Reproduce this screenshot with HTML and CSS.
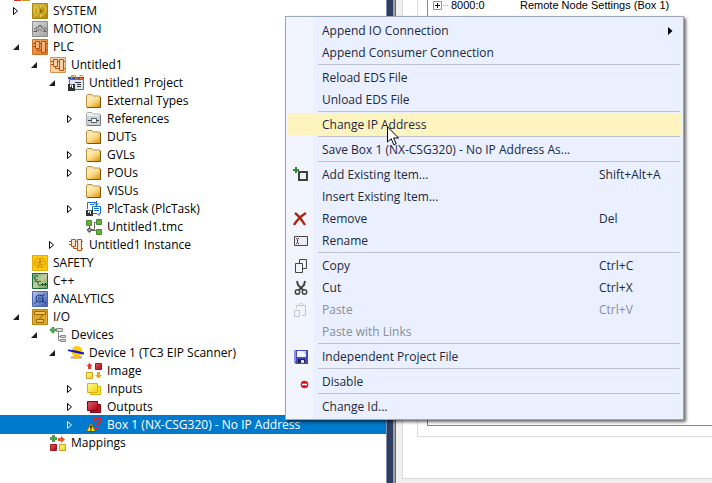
FILE: index.html
```html
<!DOCTYPE html>
<html lang="en">
<head>
	<meta charset="UTF-8">
	<title>Solution Explorer</title>
	<link rel="stylesheet" href="styles.css">
</head>
<body>
	<!-- shared icons -->
	<svg class="sprite" aria-hidden="true">
		<defs>
			<linearGradient id="g-folder" x1="0" y1="0" x2="1" y2="1"><stop offset="0" stop-color="#fff6cf"/><stop offset=".5" stop-color="#fad67c"/><stop offset="1" stop-color="#d8940c"/></linearGradient>
			<linearGradient id="g-gold" x1="0" y1="0" x2="1" y2="1"><stop offset="0" stop-color="#dcbd4c"/><stop offset="1" stop-color="#b18605"/></linearGradient>
			<linearGradient id="g-gray" x1="0" y1="0" x2="1" y2="1"><stop offset="0" stop-color="#d9d9d9"/><stop offset="1" stop-color="#a4a4a4"/></linearGradient>
			<linearGradient id="g-orange" x1="0" y1="0" x2="1" y2="1"><stop offset="0" stop-color="#f3ad6d"/><stop offset="1" stop-color="#dc7521"/></linearGradient>
			<linearGradient id="g-green" x1="0" y1="0" x2="1" y2="1"><stop offset="0" stop-color="#6fa06b"/><stop offset=".5" stop-color="#c3cf9e"/><stop offset="1" stop-color="#6c9c58"/></linearGradient>
			<linearGradient id="g-blue" x1="0" y1="0" x2="1" y2="1"><stop offset="0" stop-color="#b8c5ea"/><stop offset="1" stop-color="#3b5cae"/></linearGradient>
			<linearGradient id="g-red" x1="0" y1="0" x2="1" y2="1"><stop offset="0" stop-color="#ea5966"/><stop offset="1" stop-color="#a50716"/></linearGradient>
			<linearGradient id="g-yellow" x1="0" y1="0" x2="1" y2="1"><stop offset="0" stop-color="#ffff86"/><stop offset="1" stop-color="#f0cf16"/></linearGradient>
		</defs>
		<symbol id="open" viewBox="0 0 16 16"><path d="M8 5v6H2z" fill="#1e1e1e"/></symbol>
		<symbol id="closed" viewBox="0 0 16 16"><path d="M2.500 4.500v7l4-3.500z" fill="none" stroke="currentColor"/></symbol>
		<symbol id="folder" viewBox="0 0 16 16"><path d="M.5 4V2.500l1-1H6L7.500 3h6l.5 1v10H.5z" fill="#f7e5b0" stroke="#b98e3a"/><path d="M1 5h13v9H1z" fill="url(#g-folder)"/><path d="M14.500 4v10.500H1" fill="none" stroke="#7c5708"/></symbol>
		<symbol id="chips" viewBox="0 0 16 16"><path d="M3.500 2.500h4v7h-4zM9.500 2.500h4v11h-4z" fill="#f8d0a6" fill-opacity=".6" stroke="#b9500d"/><path d="M1 4.500h2M1 7.500h2M8 4.500h1M7 11.500h2M5.500 10v1.500H8M14 4.500h1M14 11.500h1" stroke="#b9500d" fill="none"/></symbol>
		<symbol id="plc" viewBox="0 0 16 16"><path d="M.5.5h15v15H.5z" fill="url(#g-orange)" stroke="#d2701d"/><use href="#chips"/></symbol>
	</svg>

	<div class="app">
		<nav class="explorer" aria-label="Solution Explorer">
			<div class="cut-row"></div>
			<ul class="tree">
				<li class="row level-0">
					<button class="toggle" aria-label="Expand SYSTEM"><svg><use href="#closed"/></svg></button>
					<svg class="icon" viewBox="0 0 16 16"><path d="M.5.5h15v15H.5z" fill="url(#g-gold)" stroke="#a9830f"/><path d="M4 3.500A6 6 0 0 0 4 12.500L6 11V5zM8.500 2v12M10 3l1-1 1 2 2 1-1 2 1 1-1 2-2 1-1 2-1-1" fill="none" stroke="#e7cc42"/><path d="M8 5v6l3-3z" fill="#947204"/></svg>
					<span>SYSTEM</span>
				</li>
				<li class="row level-0">
					<span class="toggle"></span>
					<svg class="icon" viewBox="0 0 16 16"><path d="M.5.5h15v15H.5z" fill="url(#g-gray)" stroke="#8b8b8b"/><path d="M1.500 10.500h3c0-3 1-4 2-4l.5-2h2l.5 2 2 1 1 1-.5 2h2.500" fill="none" stroke="#555"/><path d="M2 9l1-2 2-1M6 10.500a2 2 0 0 1 4 0M12 6l2 1v2" fill="none" stroke="#777"/></svg>
					<span>MOTION</span>
				</li>
				<li class="row level-0">
					<button class="toggle" aria-label="Collapse PLC"><svg><use href="#open"/></svg></button>
					<svg class="icon"><use href="#plc"/></svg>
					<span>PLC</span>
				</li>
				<li class="row level-1">
					<button class="toggle" aria-label="Collapse Untitled1"><svg><use href="#open"/></svg></button>
					<svg class="icon" viewBox="0 0 16 16"><path d="M.5.5h15v15H.5z" fill="#f9d3a7" stroke="#d99155"/><use href="#chips"/></svg>
					<span>Untitled1</span>
				</li>
				<li class="row level-2">
					<button class="toggle" aria-label="Collapse Untitled1 Project"><svg><use href="#open"/></svg></button>
					<svg class="icon" viewBox="0 0 16 16"><path d="M1.500 4.500h14v10h-14z" fill="#dce7fa" stroke="#4e71b8"/><path d="M0 2h16v2H0z" fill="#284d9e"/><path d="M3.500 4V.5H6V2H4M7.500 0v3.500H10M15 .5h-3v3h3" fill="none" stroke="#f47b20"/><path d="M7 7.500h6M9 9.500h4M9 11.500h4" stroke="#333"/><path d="M0 9h7v7H0z" fill="#333"/><path d="M2.500 12v-2h2v3" fill="none" stroke="#fff"/></svg>
					<span>Untitled1 Project</span>
				</li>
				<li class="row level-3">
					<span class="toggle"></span>
					<svg class="icon"><use href="#folder"/></svg>
					<span>External Types</span>
				</li>
				<li class="row level-3">
					<button class="toggle" aria-label="Expand References"><svg><use href="#closed"/></svg></button>
					<svg class="icon" viewBox="0 0 16 16"><path d="M.5 4V2.500l1-1H6L7.500 3h6l.5 1v10H.5z" fill="#eee" stroke="#aaa"/><path d="M1 5h13v9H1z" fill="#cdd2d2"/><path d="M14.500 4v10.500H1" fill="none" stroke="#777"/><path d="M2 9.500h3M11 9.500h2" stroke="#345"/><path d="M5.500 7.500h5v4h-5z" fill="#fff" stroke="#566"/></svg>
					<span>References</span>
				</li>
				<li class="row level-3">
					<span class="toggle"></span>
					<svg class="icon"><use href="#folder"/></svg>
					<span>DUTs</span>
				</li>
				<li class="row level-3">
					<button class="toggle" aria-label="Expand GVLs"><svg><use href="#closed"/></svg></button>
					<svg class="icon"><use href="#folder"/></svg>
					<span>GVLs</span>
				</li>
				<li class="row level-3">
					<button class="toggle" aria-label="Expand POUs"><svg><use href="#closed"/></svg></button>
					<svg class="icon"><use href="#folder"/></svg>
					<span>POUs</span>
				</li>
				<li class="row level-3">
					<span class="toggle"></span>
					<svg class="icon"><use href="#folder"/></svg>
					<span>VISUs</span>
				</li>
				<li class="row level-3">
					<button class="toggle" aria-label="Expand PlcTask"><svg><use href="#closed"/></svg></button>
					<svg class="icon" viewBox="0 0 16 16"><path d="M1.500 8V1.500h9V5M4 3.500h4" fill="none" stroke="#1673d1"/><path d="M10.500 0v4M8.500 2l2 2.500 2-2.500" fill="none" stroke="#1673d1"/><path d="M6.500 5.500h8v7H13v2l-2-2H6.500z" fill="#fff" stroke="#1673d1"/><path d="M8 7.500h5M8 9.500h5" stroke="#1673d1"/><path d="M0 9h7v6H0z" fill="#333"/><path d="M2.500 12v-2h2v3" fill="none" stroke="#fff"/></svg>
					<span>PlcTask (PlcTask)</span>
				</li>
				<li class="row level-3">
					<span class="toggle"></span>
					<svg class="icon" viewBox="0 0 16 16"><path d="M3.500 6v4M6 10.500h2.500v-7H10M6 11.500h4" fill="none" stroke="#666"/><path d="M.5 1.500h5v5h-5zM10.500.5h5v5h-5zM10.500 10.500h5v5h-5z" fill="#64ad3d" stroke="#4b8c2c"/><path d="M3.500 8l3 3-3 3-3-3z" fill="#555"/><path d="M2.500 11h2" stroke="#fff"/></svg>
					<span>Untitled1.tmc</span>
				</li>
				<li class="row level-2">
					<button class="toggle" aria-label="Expand Untitled1 Instance"><svg><use href="#closed"/></svg></button>
					<svg class="icon"><use href="#chips"/></svg>
					<span>Untitled1 Instance</span>
				</li>
				<li class="row level-0">
					<span class="toggle"></span>
					<svg class="icon" viewBox="0 0 16 16"><path d="M.5.5h15v15H.5z" fill="#ffcb08" stroke="#e6a805"/><path d="M7.500 3.500c-2-1-3 0-3 1-2 0-2 2-1.500 3-1 2 0 3 1 3 0 2 2 2 3 2zM8.500 3.500c2-1 3 0 3 1 2 0 2 2 1.500 3 1 2 0 3-1 3 0 2-2 2-3 2zM4 7.500h3M9 6.500h3M9 9.500h2M5 10h2" fill="none" stroke="#cf8e00"/></svg>
					<span>SAFETY</span>
				</li>
				<li class="row level-0">
					<span class="toggle"></span>
					<svg class="icon" viewBox="0 0 16 16"><path d="M.5.5h15v15H.5z" fill="url(#g-green)" stroke="#1d6a32"/><path d="M6 3.500C4 2 2.500 3 2.500 5s2 2.500 3 1.500M9 8.500c-2-1-3 0-3 2s2 2.500 3 1.500M3 8l3 1M9 11.500h3M10.500 10v3M12 11.500h3M13.500 10v3" fill="none" stroke="#0e5526"/></svg>
					<span>C++</span>
				</li>
				<li class="row level-0">
					<span class="toggle"></span>
					<svg class="icon" viewBox="0 0 16 16"><path d="M.5.5h15v15H.5z" fill="url(#g-blue)" stroke="#4a66ae"/><circle cx="7.500" cy="7.500" r="3.500" fill="none" stroke="#18357d"/><circle cx="7.500" cy="7.500" r="1.200" fill="none" stroke="#18357d"/><path d="M2 13l3-3M10 5l3-2M10 10l4 2M11 7v4" stroke="#18357d"/></svg>
					<span>ANALYTICS</span>
				</li>
				<li class="row level-0">
					<button class="toggle" aria-label="Collapse I/O"><svg><use href="#open"/></svg></button>
					<svg class="icon" viewBox="0 0 16 16"><path d="M.5.5h15v15H.5z" fill="#dda82e" stroke="#b5800e"/><path d="M2.500 2.500h11v3h-11zM4.500 10.500h7v3h-7zM11 5.500l-4 5" fill="#efc35a" stroke="#986800"/></svg>
					<span>I/O</span>
				</li>
				<li class="row level-1">
					<button class="toggle" aria-label="Collapse Devices"><svg><use href="#open"/></svg></button>
					<svg class="icon" viewBox="0 0 16 16"><path d="M8.500 5v8.500H11M8.500 9.500H11" fill="none" stroke="#888"/><path d="M6.500 1.500h6v3h-6zM10.500 8.500h5v2h-5zM10.500 12.500h5v2h-5z" fill="#ddd" stroke="#888"/><path d="M2 0h2v2h2v2H4v2H2V4H0V2h2z" fill="#55ab53" stroke="#32803a" stroke-width=".5"/></svg>
					<span>Devices</span>
				</li>
				<li class="row level-2">
					<button class="toggle" aria-label="Collapse Device 1"><svg><use href="#open"/></svg></button>
					<svg class="icon" viewBox="0 0 16 16"><ellipse cx="9" cy="6.500" rx="5.500" ry="5.500" fill="#ffcc08"/><path d="M3 11.500h11v2H3z" fill="#999fae"/><path d="M6 10h5v3.500H6z" fill="#f2bd0c"/><path d="M0 4.500l8 1 8 2v2L8 8 0 6z" fill="#1111dc"/></svg>
					<span>Device 1 (TC3 EIP Scanner)</span>
				</li>
				<li class="row level-3">
					<span class="toggle"></span>
					<svg class="icon" viewBox="0 0 16 16"><path d="M3.500 0l3 3H5v3H2V3H.5z" fill="#e5402e"/><path d="M9.500.5h6v6h-6z" fill="url(#g-red)" stroke="#9c1b27"/><path d="M.5 9.500h6v6h-6z" fill="url(#g-yellow)" stroke="#c5a125"/><path d="M11 9h3v3h2l-3.500 3.500L9 12h2z" fill="#f5a51c"/></svg>
					<span>Image</span>
				</li>
				<li class="row level-3">
					<button class="toggle" aria-label="Expand Inputs"><svg><use href="#closed"/></svg></button>
					<svg class="icon" viewBox="0 0 16 16"><path d="M4.500 5.500h10v8h-10z" fill="#ffe936" stroke="#dab10b"/><path d="M1.500 2.500h10v9h-10z" fill="url(#g-yellow)" stroke="#dab10b"/></svg>
					<span>Inputs</span>
				</li>
				<li class="row level-3">
					<button class="toggle" aria-label="Expand Outputs"><svg><use href="#closed"/></svg></button>
					<svg class="icon" viewBox="0 0 16 16"><path d="M4.500 5.500h10v8h-10z" fill="#c51025" stroke="#860012"/><path d="M1.500 2.500h10v9h-10z" fill="url(#g-red)" stroke="#860012"/></svg>
					<span>Outputs</span>
				</li>
				<li class="row level-3 selected">
					<button class="toggle" aria-label="Expand Box 1"><svg><use href="#closed"/></svg></button>
					<svg class="icon" viewBox="0 0 16 16"><path d="M8 4c0-3.500 6.500-4 6.500-1 0 2.500-3.500 3-3.500 6M9.500 12h3" fill="none" stroke="#ec1c24" stroke-width="2.200"/><path d="M5 6l4.500 8.500h-9z" fill="#ffe600" stroke="#a34b00" stroke-width=".8"/><path d="M0 14.500h11" stroke="#d01818"/><path d="M5 8.500v3M5 12.500v1" stroke="#000" stroke-width="1.500"/></svg>
					<span>Box 1 (NX-CSG320) - No IP Address</span>
				</li>
				<li class="row level-1">
					<span class="toggle"></span>
					<svg class="icon" viewBox="0 0 16 16"><path d="M2 0h3v2h2v3H5v2H2V5H0V2h2z" fill="#4c9f4c"/><path d="M8 3h3V1l4 3.500L11 8V6H8z" fill="#e95226"/><path d="M.5 9.500h6v6h-6z" fill="url(#g-red)" stroke="#9c1b27"/><path d="M9.500 9.500h6v6h-6z" fill="url(#g-yellow)" stroke="#c5a125"/></svg>
					<span>Mappings</span>
				</li>
			</ul>
		</nav>

		<div class="splitter"></div>

		<main class="editor">
			<div class="page">
				<div class="tab-body">
					<div class="list">
						<div class="list-row">
							<button class="plus" aria-label="Expand 8000:0"><svg viewBox="0 0 9 9"><path d="M.5.5h8v8h-8z" fill="#fff" stroke="#919191"/><path d="M2 4.500h5M4.500 2v5" stroke="#000"/></svg></button>
							<span class="dots"></span>
							<span class="index">8000:0</span>
							<span>Remote Node Settings (Box 1)</span>
						</div>
					</div>
				</div>
			</div>
		</main>
	</div>

	<ul class="menu">
		<li><button>Append IO Connection<svg class="submenu" viewBox="0 0 5 8"><path d="M0 0v8l4.500-4z"/></svg></button></li>
		<li><button>Append Consumer Connection</button></li>
		<li class="line"></li>
		<li><button>Reload EDS File</button></li>
		<li><button>Unload EDS File</button></li>
		<li class="line"></li>
		<li class="hover">
			<button>Change IP Address</button>
			<svg class="cursor" viewBox="0 0 13 20"><path d="M.5.800v15.200l3.700-3.300 2.600 6 2.400-1-2.600-5.700h5z" fill="#fff" stroke="#000"/></svg>
		</li>
		<li class="line"></li>
		<li><button>Save Box 1 (NX-CSG320) - No IP Address As...</button></li>
		<li class="line"></li>
		<li><button><svg class="icon" viewBox="0 0 16 16"><path d="M3 0v6M0 3h6" stroke="#2f8a34" stroke-width="2"/><path d="M6 5h8v8H6z" fill="#eee" stroke="#3f3f3f" stroke-width="2"/></svg>Add Existing Item...<kbd>Shift+Alt+A</kbd></button></li>
		<li><button>Insert Existing Item...</button></li>
		<li><button><svg class="icon" viewBox="0 0 16 16"><path d="M2 2c4 3 7 7 10 12M13 2C8 5 4 9 1 14" fill="none" stroke="#a8270f" stroke-width="2.400"/></svg>Remove<kbd>Del</kbd></button></li>
		<li><button><svg class="icon" viewBox="0 0 16 16"><path d="M1.500 3.500h13v9h-13z" fill="#eceaf7" stroke="#444"/><path d="M3 5.500h1M5 5.500h1M4.500 6v4M3 10.500h1M5 10.500h1" stroke="#444"/></svg>Rename</button></li>
		<li class="line"></li>
		<li><button><svg class="icon" viewBox="0 0 16 16"><path d="M6.500 5V1.500h7v9H10" fill="none" stroke="#444"/><path d="M2.500 5.500h7v9h-7z" fill="#f2f3fd" stroke="#444"/></svg>Copy<kbd>Ctrl+C</kbd></button></li>
		<li><button><svg class="icon" viewBox="0 0 16 16"><path d="M4 1l1 4 5 5M12 1l-1 4-5 5" fill="none" stroke="#444" stroke-width="2"/><circle cx="4.500" cy="12" r="2.200" fill="none" stroke="#444" stroke-width="1.500"/><circle cx="11.500" cy="12" r="2.200" fill="none" stroke="#444" stroke-width="1.500"/></svg>Cut<kbd>Ctrl+X</kbd></button></li>
		<li><button disabled><svg class="icon" viewBox="0 0 16 16"><path d="M3.500 6V3.500H6c0-3 4-3 4 0h2.500v10H9M6 3.500h4" fill="none" stroke="#c3c5cd"/><path d="M1.500 8.500h5v6h-5z" fill="#f2f3fd" stroke="#c3c5cd"/></svg>Paste<kbd>Ctrl+V</kbd></button></li>
		<li><button disabled>Paste with Links</button></li>
		<li class="line"></li>
		<li><button><svg class="icon" viewBox="0 0 16 16"><path d="M1 1h14v14H3l-2-2z" fill="#4a49b5"/><path d="M1 1h2v12H1z" fill="#8f90dd"/><path d="M4 2h9v6H4z" fill="#f1f5ff"/><path d="M9 2l4 4V2z" fill="#b9d8dd"/><path d="M5 10h7v4H5z" fill="#20205a"/><path d="M8 11h3v3H8z" fill="#ddd"/></svg>Independent Project File</button></li>
		<li class="line"></li>
		<li><button><svg class="icon" viewBox="0 0 16 16"><circle cx="11.500" cy="10.500" r="3.800" fill="#df1414"/><path d="M9 10.500h5" stroke="#fff" stroke-width="1.500"/></svg>Disable</button></li>
		<li class="line"></li>
		<li><button>Change Id...</button></li>
	</ul>
</body>
</html>
```

FILE: styles.css
```css
* {
	margin: 0;
	padding: 0;
	box-sizing: border-box;
}
html, body {
	height: 100%;
	overflow: hidden;
}
body {
	font: 12px "Open Sans", "Noto Sans", sans-serif;
	color: #000;
	background: #fff;
}
ul {
	list-style: none;
}
button {
	border: 0;
	background: none;
	font: inherit;
	color: inherit;
	text-align: left;
}
.sprite {
	position: absolute;
	width: 0;
	height: 0;
}
.app {
	display: flex;
	height: 100%;
}

/* tree */
.explorer {
	flex: 0 0 386px;
	overflow: hidden;
}
.cut-row {
	width: 16px;
	height: 1px;
	margin: 0 0 1px 14px;
	background: linear-gradient(90deg, #d8371b 7px, #fff 7px, #fff 8px, #c69a1b 8px);
}
.row {
	display: flex;
	align-items: center;
	gap: 5px;
	height: 18px;
	line-height: 18px;
	white-space: nowrap;
}
.level-0 {
	padding-left: 11px;
}
.level-1 {
	padding-left: 29px;
}
.level-2 {
	padding-left: 47px;
}
.level-3 {
	padding-left: 65px;
}
.toggle,
.toggle svg,
.icon {
	display: block;
	flex: none;
	width: 16px;
	height: 16px;
}
.selected {
	color: #fff;
	background: #007acc;
	box-shadow: 0 -1px #007acc;
}

/* right side */
.splitter {
	flex: none;
	width: 10px;
	border: solid #7f8bab;
	border-width: 0 0 0 1px;
	background: linear-gradient(90deg, #2f3f62 6px, #a0a0a0 6px, #a0a0a0 8px, #696969 8px);
}
.editor {
	flex: 1;
	padding: 0 0 4px 6px;
	background: #f0f0f0;
}
.page {
	height: 100%;
	padding: 0 0 41px 14px;
	border: solid #d9d9d9;
	border-width: 0 0 1px 1px;
	background: #fff;
}
.tab-body {
	height: 100%;
	padding: 0 0 10px 9px;
	border: solid #dcdcdc;
	border-width: 0 0 1px 1px;
}
.list {
	height: 100%;
	padding-left: 5px;
	border: solid #828790;
	border-width: 0 0 1px 1px;
}
.list-row {
	display: flex;
	align-items: center;
	height: 10px;
	font: 11px/10px "Liberation Sans", Arial, sans-serif;
	white-space: nowrap;
}
.plus,
.plus svg {
	display: block;
	width: 9px;
	height: 9px;
}
.dots {
	width: 5px;
	margin: 0 3px 0 1px;
	border-top: 1px dotted #a0a0a0;
}
.index {
	width: 69px;
}

/* context menu */
.menu {
	position: absolute;
	top: 16px;
	left: 285px;
	width: 399px;
	padding: 2px;
	border: 1px solid #9ba7b7;
	color: #1b293e;
	background: linear-gradient(90deg, #f2f4fe 27px, #eaf0ff 27px);
	box-shadow: 2px 2px 3px rgba(0, 0, 0, .6);
}
.menu button {
	display: grid;
	grid-template-columns: 29px 1fr 82px;
	align-items: center;
	width: 100%;
	height: 22px;
	padding: 2px 0 0 5px;
	line-height: 20px;
	white-space: nowrap;
}
.menu button::before {
	content: "";
	grid-area: 1 / 1;
}
.menu .icon {
	grid-area: 1 / 1;
}
.menu kbd {
	font: inherit;
}
.menu button:disabled {
	color: #8b8d94;
}
.menu .line {
	height: 1px;
	margin: 1px 1px 1px 30px;
	background: #bec3cb;
}
.submenu {
	width: 5px;
	height: 8px;
	margin-left: 69px;
}
.hover {
	position: relative;
	background: #fdf4bf;
}
.cursor {
	position: absolute;
	top: 13px;
	left: 99px;
	z-index: 1;
	width: 13px;
	height: 20px;
}
```
